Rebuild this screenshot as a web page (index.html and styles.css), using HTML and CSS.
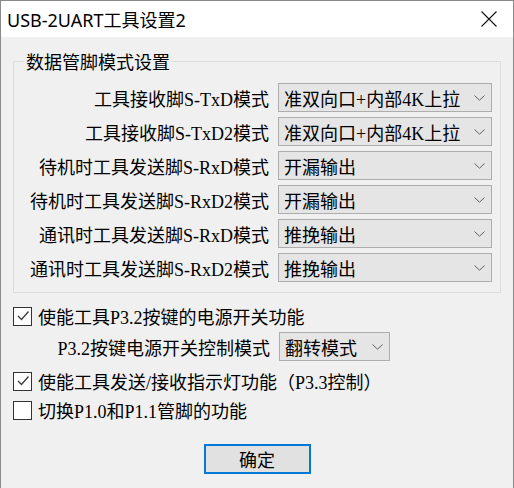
FILE: index.html
```html
<!DOCTYPE html>
<html lang="zh-CN">
<head>
    <meta charset="UTF-8">
    <title>USB-2UART工具设置2</title>
    <link rel="stylesheet" href="styles.css">
</head>
<body>

<div class="window">
    <div class="titlebar">
        <span class="title">USB-2UART工具设置2</span>
        <svg class="close" width="16" height="16" viewBox="0 0 16 16">
            <path d="M0.5 0.5 L15.5 15.5 M15.5 0.5 L0.5 15.5" stroke="#111" stroke-width="1.1" fill="none"/>
        </svg>
    </div>

    <div class="content">
        <fieldset class="group">
            <legend>数据管脚模式设置</legend>
            <div class="row">
                <label>工具接收脚S-TxD模式</label>
                <div class="combo">准双向口+内部4K上拉<svg class="arrow" width="11" height="6" viewBox="0 0 11 6"><path d="M0.5 0.5 L5.5 5.2 L10.5 0.5" stroke="#606060" fill="none"/></svg></div>
            </div>
            <div class="row">
                <label>工具接收脚S-TxD2模式</label>
                <div class="combo">准双向口+内部4K上拉<svg class="arrow" width="11" height="6" viewBox="0 0 11 6"><path d="M0.5 0.5 L5.5 5.2 L10.5 0.5" stroke="#606060" fill="none"/></svg></div>
            </div>
            <div class="row">
                <label>待机时工具发送脚S-RxD模式</label>
                <div class="combo">开漏输出<svg class="arrow" width="11" height="6" viewBox="0 0 11 6"><path d="M0.5 0.5 L5.5 5.2 L10.5 0.5" stroke="#606060" fill="none"/></svg></div>
            </div>
            <div class="row">
                <label>待机时工具发送脚S-RxD2模式</label>
                <div class="combo">开漏输出<svg class="arrow" width="11" height="6" viewBox="0 0 11 6"><path d="M0.5 0.5 L5.5 5.2 L10.5 0.5" stroke="#606060" fill="none"/></svg></div>
            </div>
            <div class="row">
                <label>通讯时工具发送脚S-RxD模式</label>
                <div class="combo">推挽输出<svg class="arrow" width="11" height="6" viewBox="0 0 11 6"><path d="M0.5 0.5 L5.5 5.2 L10.5 0.5" stroke="#606060" fill="none"/></svg></div>
            </div>
            <div class="row">
                <label>通讯时工具发送脚S-RxD2模式</label>
                <div class="combo">推挽输出<svg class="arrow" width="11" height="6" viewBox="0 0 11 6"><path d="M0.5 0.5 L5.5 5.2 L10.5 0.5" stroke="#606060" fill="none"/></svg></div>
            </div>
        </fieldset>

        <div class="check first">
            <span class="box"><svg width="16" height="16" viewBox="0 0 16 16"><path d="M3 8 L6.5 11.5 L13.5 3.5" stroke="#404040" stroke-width="1.4" fill="none"/></svg></span>
            <span>使能工具P3.2按键的电源开关功能</span>
        </div>
        <div class="row sub">
            <label>P3.2按键电源开关控制模式</label>
            <div class="combo">翻转模式<svg class="arrow" width="11" height="6" viewBox="0 0 11 6"><path d="M0.5 0.5 L5.5 5.2 L10.5 0.5" stroke="#606060" fill="none"/></svg></div>
        </div>
        <div class="check second">
            <span class="box"><svg width="16" height="16" viewBox="0 0 16 16"><path d="M3 8 L6.5 11.5 L13.5 3.5" stroke="#404040" stroke-width="1.4" fill="none"/></svg></span>
            <span>使能工具发送/接收指示灯功能（P3.3控制）</span>
        </div>
        <div class="check third">
            <span class="box"></span>
            <span>切换P1.0和P1.1管脚的功能</span>
        </div>

        <div class="actions">
            <button class="button">确定</button>
        </div>
    </div>
</div>

</body>
</html>
```

FILE: styles.css
```css
body { margin: 0; background: #f0f0f0; font-family: "Liberation Serif", "Noto Sans CJK SC", serif; font-size: 18px; color: #000; }
.window { width: 514px; height: 488px; box-sizing: border-box; border: 1px solid #8a8a8a; border-bottom: none; background: #f0f0f0; }
.titlebar { height: 36px; background: #fff; display: flex; align-items: center; justify-content: space-between; padding: 0 16px 0 6px; }
.title { font-family: "Noto Sans", "Noto Sans CJK SC", sans-serif; font-size: 18px; line-height: 20px; margin-top: 2px; }
.close { display: block; }
.content { padding: 0 12px; }
.group { margin: 14px 0 0 0; padding: 12px 8px 10px 10px; border: 1px solid #dcdcdc; }
.group legend { font-family: "Noto Sans CJK SC", sans-serif; font-size: 18px; line-height: 20px; padding: 0 2px; }
.row { display: grid; grid-template-columns: 1fr 214px; column-gap: 9px; align-items: center; margin-bottom: 5px; }
.row:last-child { margin-bottom: 0; }
.row label { text-align: right; white-space: nowrap; }
.combo { height: 29px; box-sizing: border-box; border: 1px solid #adadad; background: #e5e5e5; display: flex; align-items: center; justify-content: space-between; padding: 0 6px 0 5px; white-space: nowrap; }
.row.sub { grid-template-columns: 257px 111px; margin: 4px 0 0 0; }
.check { display: flex; align-items: center; gap: 6px; height: 24px; }
.check.first { margin-top: 11px; }
.check.second { margin-top: 8px; }
.check.third { margin-top: 5px; }
.box { width: 19px; height: 19px; box-sizing: border-box; border: 1px solid #333; background: #fff; display: flex; align-items: center; justify-content: center; }
.box svg { display: block; }
.actions { display: flex; justify-content: center; margin-top: 22px; }
.button { width: 107px; height: 30px; box-sizing: border-box; border: 2px solid #0078d7; background: #e1e1e1; font-family: "Noto Sans CJK SC", sans-serif; font-size: 18px; padding: 0; color: #000; }
```
